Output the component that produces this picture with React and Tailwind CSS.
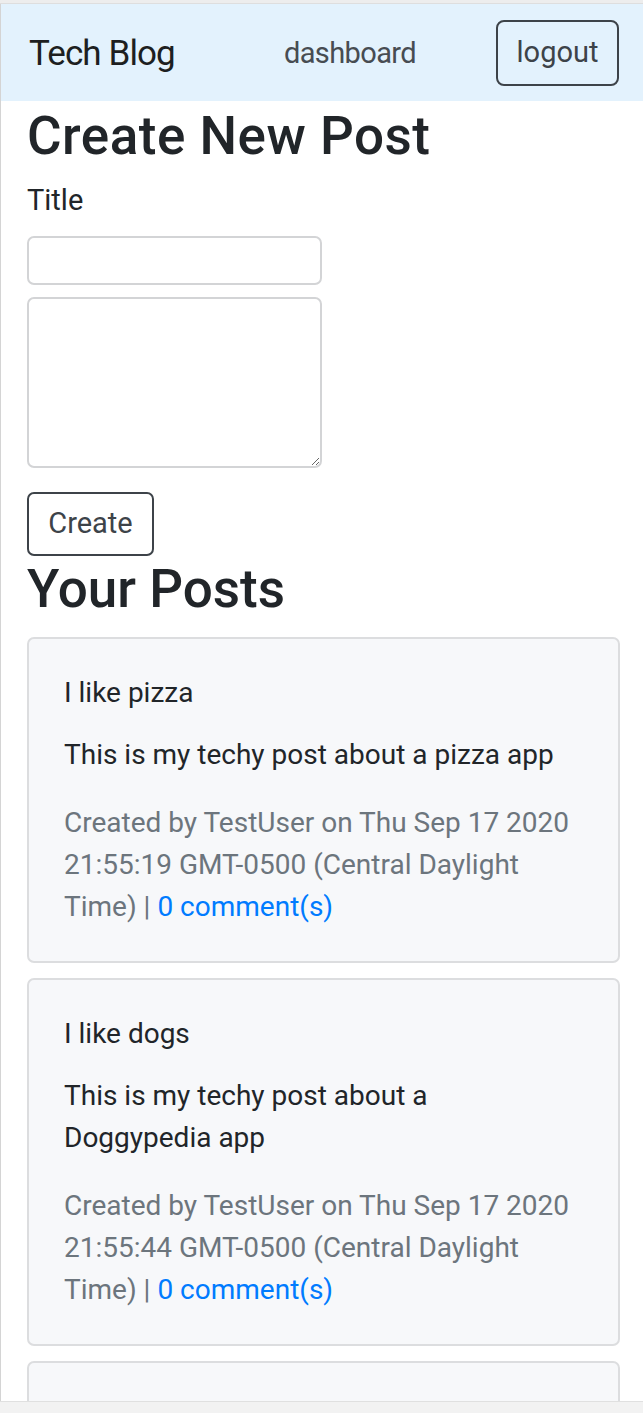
import React from "react";

// posts shown under "Your Posts"
const posts = [
    {
        title: "I like pizza",
        body: "This is my techy post about a pizza app",
        date: "Thu Sep 17 2020 21:55:19 GMT-0500 (Central Daylight Time)",
    },
    {
        title: "I like dogs",
        body: "This is my techy post about a Doggypedia app",
        date: "Thu Sep 17 2020 21:55:44 GMT-0500 (Central Daylight Time)",
    },
    {
        title: "I like cats",
        body: "This is my techy post about a cat app",
        date: "Thu Sep 17 2020 21:56:02 GMT-0500 (Central Daylight Time)",
    },
];

const PostCard = ({ post }) => (
    <div className="mb-[15px] border-2 border-[#dcdddf] rounded-[7px] bg-[#f7f8fa] pl-[35px] pr-[40px] pt-[33px] pb-[33px] text-[28px] leading-[42px]">
        <p className="text-[#212529]">{post.title}</p>
        <p className="mt-[20px] text-[#212529]">{post.body}</p>
        <p className="mt-[26px] text-[#6c757d]">
            Created by TestUser on {post.date} |{" "}
            <a href="#" className="text-[#007bff]">
                0 comment(s)
            </a>
        </p>
    </div>
);

export default function App() {
    return (
        <div className="h-[1413px] overflow-hidden bg-[#f2f2f2] flex flex-col font-['Roboto',sans-serif] text-[#212529]">
            <div className="h-[4px] shrink-0 bg-[#ededed] border-b border-[#dedede]" />
            <div className="flex-1 min-h-0 overflow-hidden bg-white border-l border-[#d4d4d4]">
                {/* navbar */}
                <nav className="h-[97px] bg-[#e3f2fd] flex items-center pl-[28px] pr-[24px]">
                    <a href="#" className="mt-[3px] text-[35px] tracking-[-0.9px] text-[#1d1f21]">
                        Tech Blog
                    </a>
                    <a href="#" className="mt-[3px] ml-[109px] text-[29px] tracking-[-0.6px] text-[#474c52]">
                        dashboard
                    </a>
                    <button className="ml-auto w-[123px] h-[66px] border-2 border-[#3d4349] rounded-[8px] text-[29px] text-[#3d4349]">
                        logout
                    </button>
                </nav>

                <main className="pl-[26px] pr-[23px]">
                    <h1 className="mt-[5px] text-[53px] leading-[61px] tracking-[0.5px] font-medium">
                        Create New Post
                    </h1>
                    <form onSubmit={(e) => e.preventDefault()}>
                        <label className="block mt-[12px] text-[29px] leading-[43px]">
                            Title
                        </label>
                        <input
                            type="text"
                            className="block mt-[14px] w-[295px] h-[49px] border-2 border-[#d3d4d6] rounded-[7px] bg-white"
                        />
                        <textarea className="block mt-[12px] w-[295px] h-[171px] border-2 border-[#d3d4d6] rounded-[7px] bg-white" />
                        <button className="block mt-[24px] w-[127px] h-[64px] border-2 border-[#3d4349] rounded-[7px] text-[29px] text-[#3d4349]">
                            Create
                        </button>
                    </form>

                    <h2 className="mt-[3px] text-[53px] leading-[61px] font-medium">
                        Your Posts
                    </h2>
                    <div className="mt-[17px]">
                        {posts.map((post) => (
                            <PostCard key={post.title} post={post} />
                        ))}
                    </div>
                </main>
            </div>
            <div className="h-[12px] shrink-0 bg-[#f2f2f2] border-t border-[#e0e0e0]" />
        </div>
    );
}
